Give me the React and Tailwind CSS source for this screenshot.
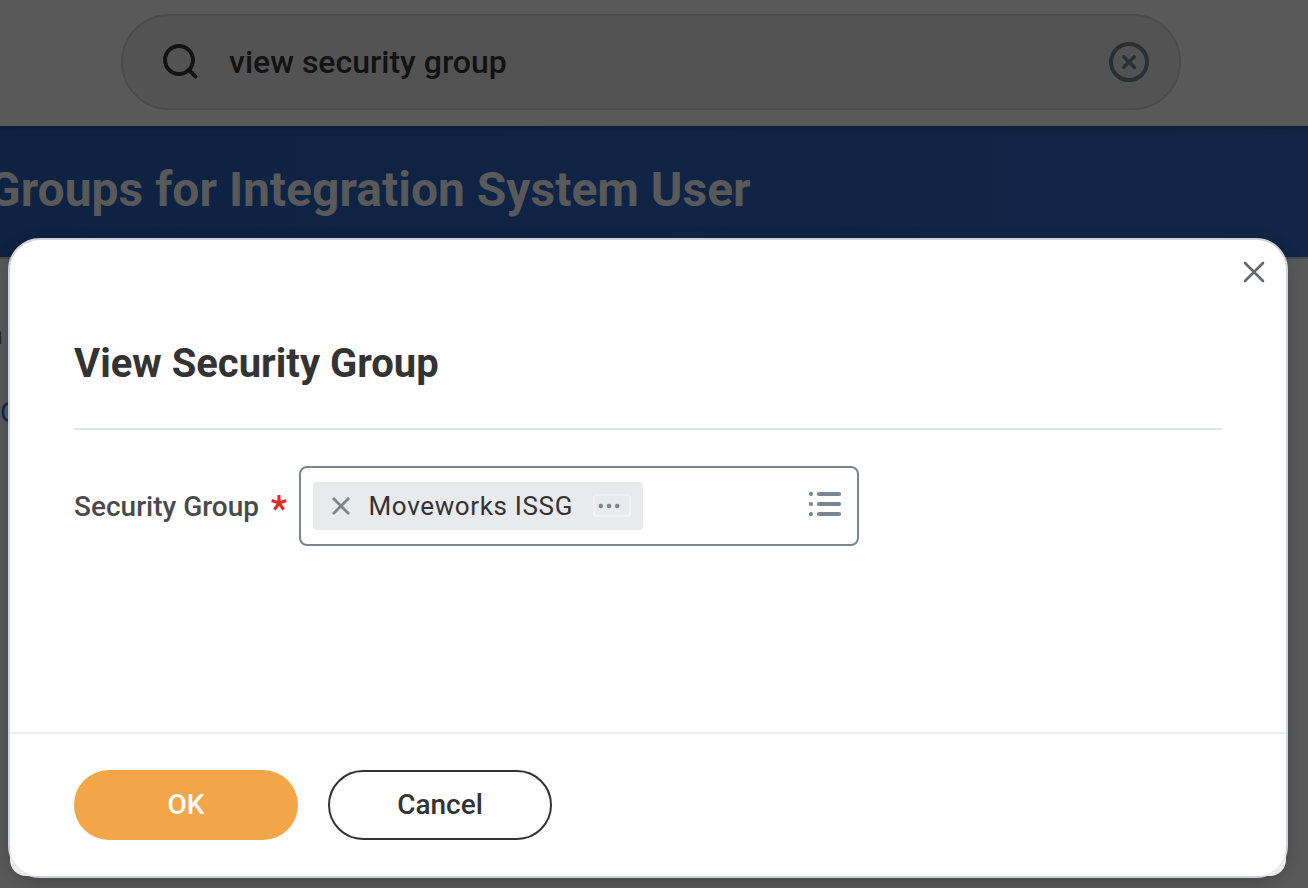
function SearchBar() {
  return (
    <header className="flex h-[126px] shrink-0 items-start bg-[#595959] pl-[121px] pt-[14px]">
      <div className="flex h-24 w-[1060px] items-center rounded-full border-2 border-[#4b4b4b] bg-[#535353] pl-[39px] pr-[30px]">
        <svg className="h-[38px] w-[38px] shrink-0" viewBox="0 0 38 38" fill="none" stroke="#121212" strokeWidth="4">
          <circle cx="17" cy="17" r="14" />
          <path d="M27 27l6.4 6.4" strokeLinecap="round" />
        </svg>
        <span className="ml-[29px] flex-1 whitespace-nowrap text-[32px] font-medium leading-10 text-[#121212]">view security group</span>
        <svg className="h-10 w-10 shrink-0" viewBox="0 0 40 40" fill="none" stroke="#2b2f33">
          <circle cx="20" cy="20" r="18" strokeWidth="4" />
          <path d="M14.7 14.7l10.6 10.6M25.3 14.7l-10.6 10.6" strokeWidth="3.4" strokeLinecap="round" />
        </svg>
      </div>
    </header>
  );
}

function PageBanner() {
  return (
    <div className="flex h-[133px] shrink-0 items-start overflow-hidden border-b-2 border-[#4b4b4b] bg-linear-to-r from-[#0e2242] to-[#112648] bg-clip-padding shadow-[inset_0_10px_8px_-8px_rgba(0,0,0,0.2)]">
      <h1 className="-ml-3 mt-[36px] whitespace-nowrap text-[48px] font-bold leading-[56px] text-[#595959]">Groups for Integration System User</h1>
    </div>
  );
}

function SelectedGroup() {
  return (
    <div className="flex h-12 w-[330px] items-center rounded-[4px] bg-[#e8eaec] pl-[18px]">
      <svg className="h-5 w-5 shrink-0" viewBox="0 0 20 20" fill="none" stroke="#7b858f" strokeWidth="2.8">
        <path d="M2 2l16 16M18 2L2 18" />
      </svg>
      <span className="ml-[17.5px] w-[224.5px] whitespace-nowrap text-[26px] leading-8 tracking-[0.65px] text-[#333]">Moveworks ISSG</span>
      <svg className="h-6 w-[38px] shrink-0" viewBox="0 0 38 24" fill="#7b858f">
        <rect x="1" y="1" width="36" height="21" rx="3" fill="none" stroke="#f0f1f2" strokeWidth="2" />
        <circle cx="7.8" cy="12" r="2.3" />
        <circle cx="16" cy="12" r="2.3" />
        <circle cx="24.2" cy="12" r="2.3" />
      </svg>
    </div>
  );
}

function Dialog() {
  return (
    <section className="absolute left-2 top-[238px] flex h-[640px] w-[1280px] flex-col rounded-[32px] border-2 border-[#ced3d9] bg-white shadow-[0_4px_16px_rgba(0,0,0,0.22)]">
      <div className="flex h-[68px] shrink-0 justify-end pr-[21px] pt-[21px]">
        <svg className="h-[22px] w-[22px]" viewBox="0 0 22 22" fill="none" stroke="#5f6a75" strokeWidth="2.6" strokeLinecap="round">
          <path d="M2 2l18 18M20 2L2 20" />
        </svg>
      </div>
      <div className="mx-16 h-[122px] shrink-0 border-b-2 border-[#dfe2e6] pt-8">
        <h2 className="whitespace-nowrap text-[40px] font-bold leading-[48px] text-[#333]">View Security Group</h2>
      </div>
      <div className="flex flex-1 items-start pl-16 pt-9">
        <div className="flex h-20 w-[225px] shrink-0 items-center text-[28px] font-medium text-[#4a4a4a]">
          <span className="mt-[2px] whitespace-nowrap">Security Group</span>
          <svg className="-mt-[6px] ml-3 h-4 w-4" viewBox="0 0 16 16" fill="none" stroke="#de2e21" strokeWidth="3.1">
            <path d="M8 8V0M8 8L.7 5.5M8 8l7.3-2.5M8 8l-4.6 6.6M8 8l4.6 6.6" />
          </svg>
        </div>
        <div className="flex h-20 w-[560px] items-center justify-between rounded-lg border-2 border-[#7b858f] pl-3 pr-4">
          <SelectedGroup />
          <svg className="-mt-1 h-6 w-8" viewBox="0 0 32 24" fill="#7b858f">
            <circle cx="2" cy="2" r="2.1" />
            <circle cx="2" cy="12" r="2.1" />
            <circle cx="2" cy="22" r="2.1" />
            <rect x="8" width="24" height="4" rx="1.8" />
            <rect x="8" y="10" width="24" height="4" rx="1.8" />
            <rect x="8" y="20" width="24" height="4" rx="1.8" />
          </svg>
        </div>
      </div>
      <footer className="h-[144px] shrink-0 rounded-b-[16px] border-t-2 border-[#eeeff0] bg-[#ececec]">
        <div className="flex h-full items-start gap-[30px] rounded-b-[30px] bg-white pl-16 pt-9">
          <button className="h-[70px] w-56 rounded-full bg-[#f2a648] text-[28px] font-medium text-white">OK</button>
          <button className="h-[70px] w-56 rounded-full border-2 border-[#333] bg-white text-[28px] font-medium text-[#333]">Cancel</button>
        </div>
      </footer>
    </section>
  );
}

export default function App() {
  return (
    <main className="relative flex h-[888px] w-[1308px] flex-col overflow-hidden bg-[#595959] font-['Roboto',sans-serif]">
      <SearchBar />
      <PageBanner />
      <div className="flex flex-col items-start">
        <span className="-ml-[13px] mt-[60px] text-[28px] font-medium leading-8 text-[#222]">n</span>
        <span className="mt-[46px] text-[28px] leading-8 text-[#0b2951]">C</span>
      </div>
      <Dialog />
    </main>
  );
}
